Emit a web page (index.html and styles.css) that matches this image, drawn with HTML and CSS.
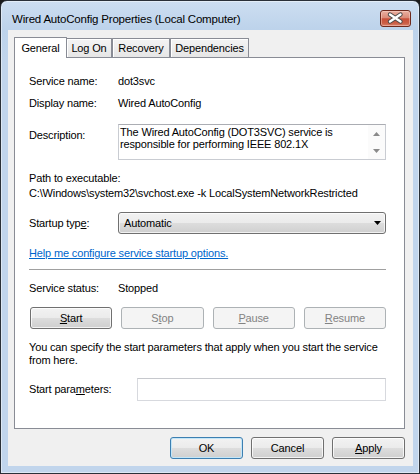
FILE: index.html
```html
<!DOCTYPE html>
<html>
<head>
<meta charset="utf-8">
<title>Wired AutoConfig Properties</title>
<link rel="stylesheet" href="styles.css">
</head>
<body>
<div class="window">
  <div class="titlebar">
    <span class="title">Wired AutoConfig Properties (Local Computer)</span>
    <div class="close">
      <svg width="29" height="15" viewBox="0 0 29 15">
        <path d="M9 3.5 L19.5 10.5 M19.5 3.5 L9 10.5" stroke="#4a4a4a" stroke-width="4.4" stroke-linecap="round" fill="none"/>
        <path d="M9 3.5 L19.5 10.5 M19.5 3.5 L9 10.5" stroke="#ffffff" stroke-width="2.4" stroke-linecap="round" fill="none"/>
      </svg>
    </div>
  </div>
  <div class="client">
    <div class="tabs">
      <div class="tab active">General</div>
      <div class="tab t-logon">Log On</div>
      <div class="tab t-rec">Recovery</div>
      <div class="tab t-dep">Dependencies</div>
    </div>
    <div class="panel">
      <div class="row r-service"><span class="lbl">Service name:</span><span>dot3svc</span></div>
      <div class="row r-display"><span class="lbl">Display name:</span><span>Wired AutoConfig</span></div>
      <div class="row r-desc">
        <span class="lbl lbl-desc">Description:</span>
        <div class="descbox">
          <div class="desctext">The Wired AutoConfig (DOT3SVC) service is<br>responsible for performing IEEE 802.1X</div>
          <div class="vscroll">
            <div class="arr"><svg width="7" height="4" viewBox="0 0 7 4"><path d="M0 4 L3.5 0 L7 4 Z" fill="#8a8a8a"/></svg></div>
            <div class="arr"><svg width="7" height="4" viewBox="0 0 7 4"><path d="M0 0 L7 0 L3.5 4 Z" fill="#8a8a8a"/></svg></div>
          </div>
        </div>
      </div>
      <div class="r-pathlbl">Path to executable:</div>
      <div class="r-path">C:\Windows\system32\svchost.exe -k LocalSystemNetworkRestricted</div>
      <div class="row r-startup">
        <span class="lbl">Startup typ<u>e</u>:</span>
        <div class="combo">
          <span>Automatic</span>
          <svg width="7" height="4" viewBox="0 0 7 4"><path d="M0 0 L7 0 L3.5 4 Z" fill="#000"/></svg>
        </div>
      </div>
      <a class="link" href="#">Help me configure service startup options.</a>
      <div class="sep"></div>
      <div class="row r-status"><span class="lbl">Service status:</span><span>Stopped</span></div>
      <div class="svcbtns">
        <div class="btn"><u>S</u>tart</div>
        <div class="btn disabled">S<u>t</u>op</div>
        <div class="btn disabled"><u>P</u>ause</div>
        <div class="btn disabled"><u>R</u>esume</div>
      </div>
      <p class="para">You can specify the start parameters that apply when you start the service from here.</p>
      <div class="row r-params">
        <span class="lbl lbl-params">Start para<u>m</u>eters:</span>
        <div class="input"></div>
      </div>
    </div>
    <div class="footer">
      <div class="btn fbtn default">OK</div>
      <div class="btn fbtn">Cancel</div>
      <div class="btn fbtn"><u>A</u>pply</div>
    </div>
  </div>
</div>
</body>
</html>
```
FILE: styles.css
```css
html, body {
  margin: 0;
  padding: 0;
  background: #1b1b1b;
}
body {
  font-family: "Liberation Sans", Arial, sans-serif;
  font-size: 11px;
  line-height: 13px;
  letter-spacing: -0.15px;
  color: #000;
}
.window {
  width: 420px;
  height: 474px;
  box-sizing: border-box;
  border: 1px solid #2a3038;
  border-radius: 7px 7px 0 0;
  background: linear-gradient(to bottom, #cddef1 0px, #bdd3eb 28px, #c1d5ec 60px, #c1d5ec 100%);
  box-shadow: inset 0 0 0 1px rgba(255, 255, 255, 0.45);
  display: flex;
  flex-direction: column;
  overflow: hidden;
}
.titlebar {
  height: 29px;
  flex: none;
  display: flex;
  justify-content: space-between;
  align-items: flex-start;
}
.title {
  font-size: 11.5px;
  line-height: 15px;
  letter-spacing: -0.2px;
  margin: 11px 0 0 11px;
  color: #000;
}
.close {
  width: 31px;
  height: 17px;
  box-sizing: border-box;
  margin: 9px 8px 0 0;
  border: 1px solid #6e2a1e;
  border-radius: 3px;
  background: linear-gradient(to bottom, #eab0a2 0%, #db8b78 45%, #c8503a 52%, #cb5d44 80%, #d9806a 100%);
  box-shadow: inset 0 0 0 1px rgba(255, 220, 210, 0.45);
  display: flex;
  align-items: center;
  justify-content: center;
}
.close svg { display: block; }
.client {
  flex: none;
  height: 436px;
  margin: 0 6px 0 7px;
  background: #f0f0f0;
  box-sizing: border-box;
  padding: 7px 8px 0 6px;
  display: flex;
  flex-direction: column;
}
.tabs {
  display: flex;
  align-items: flex-end;
  height: 20px;
  flex: none;
}
.tab {
  box-sizing: border-box;
  height: 19px;
  border: 1px solid #898c95;
  border-bottom: none;
  background: linear-gradient(to bottom, #f4f4f4, #e6e6e6);
  box-shadow: inset 1px 1px 0 #ffffff;
  display: flex;
  align-items: center;
  justify-content: center;
  padding-top: 1px;
  white-space: nowrap;
  border-radius: 1px 1px 0 0;
}
.tab.active {
  height: 21px;
  width: 53px;
  background: #ffffff;
  box-shadow: none;
  position: relative;
  z-index: 1;
  margin-bottom: -1px;
  padding-top: 0;
}
.t-logon { width: 46px; margin-left: -1px; }
.t-rec { width: 58px; }
.t-dep { width: 79px; }
.panel {
  width: 391px;
  height: 372px;
  box-sizing: border-box;
  border: 1px solid #898c95;
  background: #ffffff;
  padding: 0 18px 0 14px;
  display: flex;
  flex-direction: column;
  flex: none;
}
.row {
  display: flex;
  align-items: flex-start;
}
.lbl {
  width: 89px;
  flex: none;
}
.r-service { margin-top: 17px; }
.r-display { margin-top: 9px; }
.r-desc { margin-top: 14px; }
.lbl-desc { padding-top: 5px; }
.descbox {
  flex: 1;
  height: 36px;
  box-sizing: border-box;
  border: 1px solid #c9ccd2;
  border-top-color: #abadb3;
  display: flex;
  background: #fff;
}
.desctext {
  flex: 1;
  padding: 1px 2px 0 1px;
  line-height: 12px;
  white-space: nowrap;
  overflow: hidden;
}
.vscroll {
  width: 17px;
  flex: none;
  display: flex;
  flex-direction: column;
  background: #fbfbfb;
}
.arr {
  height: 17px;
  display: flex;
  align-items: center;
  justify-content: center;
}
.arr svg { display: block; }
.r-pathlbl { margin-top: 12px; }
.r-path { margin-top: 2px; white-space: nowrap; }
.r-startup { margin-top: 12px; align-items: center; }
.combo {
  flex: 1;
  height: 22px;
  box-sizing: border-box;
  border: 1px solid #707070;
  border-radius: 3px;
  background: linear-gradient(to bottom, #f2f2f2 0%, #ebebeb 50%, #dddddd 50%, #cfcfcf 100%);
  box-shadow: inset 0 0 0 1px rgba(255, 255, 255, 0.7);
  display: flex;
  align-items: center;
  justify-content: space-between;
  padding: 0 4px 0 5px;
}
.combo svg { display: block; }
.link {
  margin-top: 13px;
  color: #0066cc;
  text-decoration: underline;
  align-self: flex-start;
}
.sep {
  margin-top: 9px;
  height: 0;
  border-top: 1px solid #a0a0a0;
  border-bottom: 1px solid #ffffff;
}
.r-status { margin-top: 11px; }
.svcbtns {
  margin-top: 12px;
  display: grid;
  grid-template-columns: repeat(4, 1fr);
  column-gap: 9px;
  padding-left: 1px;
}
.btn {
  height: 22px;
  box-sizing: border-box;
  border: 1px solid #707070;
  border-radius: 3px;
  background: linear-gradient(to bottom, #f2f2f2 0%, #ebebeb 50%, #dddddd 50%, #cfcfcf 100%);
  box-shadow: inset 0 0 0 1px rgba(255, 255, 255, 0.75);
  display: flex;
  align-items: center;
  justify-content: center;
}
.btn.disabled {
  border-color: #adb2b5;
  background: #f4f4f4;
  box-shadow: none;
  color: #838383;
}
.para {
  margin: 12px 0 0 0;
}
.r-params { margin-top: 11px; align-items: center; }
.lbl-params { width: 108px; }
.input {
  flex: 1;
  height: 23px;
  box-sizing: border-box;
  border: 1px solid #d7d9de;
  border-top-color: #c6c8cd;
  background: #ffffff;
}
.footer {
  margin-top: 8px;
  display: flex;
  justify-content: flex-end;
  gap: 8px;
}
.fbtn { width: 73px; }
.btn.default {
  border-color: #3c7fb1;
  box-shadow: inset 0 0 0 1px #c3e6f8;
}
u { text-decoration: underline; }
```
